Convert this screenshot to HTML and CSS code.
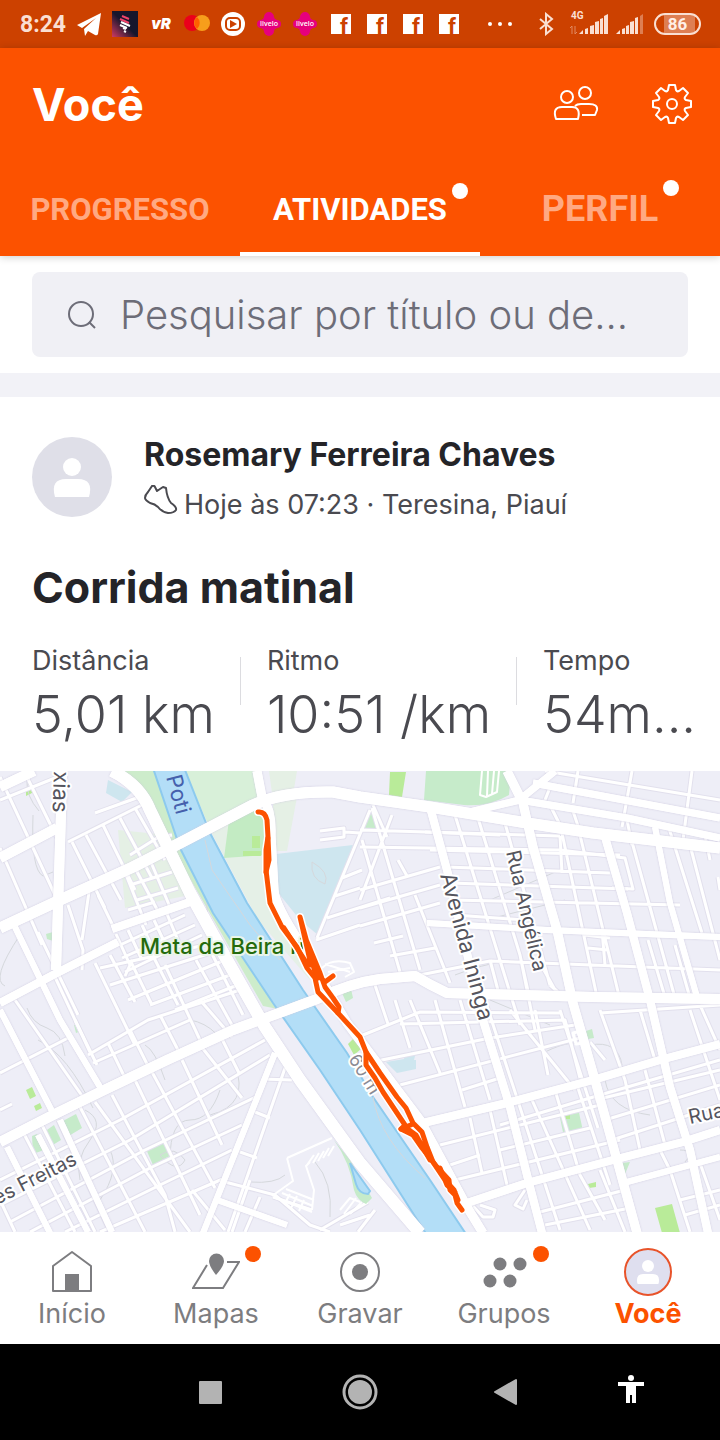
FILE: index.html
```html
<!DOCTYPE html>
<html lang="pt-BR">
<head>
    <meta charset="UTF-8">
    <meta name="viewport" content="width=device-width, initial-scale=1.0">
    <title>Você - Atividades</title>
    <link rel="stylesheet" href="styles.css">
</head>
<body>
    <div class="status-bar">
        <span class="clock">8:24</span>
        <div class="notifications">
            <svg viewBox="0 0 26 26"><path d="M1 14 25 2 22 23q-1 2-3 1l-7-4-3 5-1-7 12-11L6 17z" fill="#fff"/></svg>
            <svg viewBox="0 0 26 26">
                <defs><linearGradient id="app" x1="0" y1="1" x2="1" y2="0"><stop offset="0" stop-color="#d03a62"/><stop offset=".5" stop-color="#16162c"/></linearGradient></defs>
                <path d="M0 0h26v26H0z" fill="url(#app)"/>
                <path d="m10 5 7 3M8 8l9 4" stroke="#f0436a" stroke-width="2"/>
                <path d="m9 11 9 4M8 14l7 3M11 17l3 1M12 20l2 1" stroke="#fff" stroke-width="2"/>
            </svg>
            <svg viewBox="0 0 26 26"><text x="13" y="18" text-anchor="middle" class="logo-vr">vR</text></svg>
            <svg viewBox="0 0 26 26"><circle cx="8" cy="12" r="8" fill="#eb001b"/><circle cx="18" cy="12" r="8" fill="#f79e1b"/><path d="M13 6a8 8 0 0 1 0 12 8 8 0 0 1 0-12" fill="#ff5f00"/></svg>
            <svg viewBox="0 0 26 26"><circle cx="13" cy="13" r="12" fill="#fff"/><rect x="6" y="7" width="14" height="12" rx="4" fill="none" stroke="#cc4100" stroke-width="2"/><path d="m10 9 7 4-7 4z" fill="#cc4100"/></svg>
            <svg viewBox="0 0 26 26"><path d="M8 6a5 5 0 0 1 10 0q0 2 3 3a4 4 0 0 1 0 8q-3 1-3 3a5 5 0 0 1-10 0q0-2-3-3a4 4 0 0 1 0-8q3-1 3-3" fill="#e6007e"/><text x="13" y="15" text-anchor="middle" class="logo-livelo">livelo</text></svg>
            <svg viewBox="0 0 26 26"><path d="M8 6a5 5 0 0 1 10 0q0 2 3 3a4 4 0 0 1 0 8q-3 1-3 3a5 5 0 0 1-10 0q0-2-3-3a4 4 0 0 1 0-8q3-1 3-3" fill="#e6007e"/><text x="13" y="15" text-anchor="middle" class="logo-livelo">livelo</text></svg>
            <svg viewBox="0 0 26 26"><path d="M3 3h20v20H3z" fill="#fff"/><text x="16" y="23" text-anchor="middle" class="logo-f">f</text></svg>
            <svg viewBox="0 0 26 26"><path d="M3 3h20v20H3z" fill="#fff"/><text x="16" y="23" text-anchor="middle" class="logo-f">f</text></svg>
            <svg viewBox="0 0 26 26"><path d="M3 3h20v20H3z" fill="#fff"/><text x="16" y="23" text-anchor="middle" class="logo-f">f</text></svg>
            <svg viewBox="0 0 26 26"><path d="M3 3h20v20H3z" fill="#fff"/><text x="16" y="23" text-anchor="middle" class="logo-f">f</text></svg>
        </div>
        <div class="system">
            <svg class="more" viewBox="0 0 26 24"><g fill="#fff"><circle cx="3" cy="12" r="2"/><circle cx="13" cy="12" r="2"/><circle cx="23" cy="12" r="2"/></g></svg>
            <svg class="bluetooth" viewBox="0 0 16 24"><path d="m2 7 12 10-6 5V2l6 5L2 17" fill="none" stroke="#fadfd2" stroke-width="2"/></svg>
            <svg class="signal" viewBox="0 0 38 24">
                <text x="2" y="7" class="net">4G</text>
                <path d="M3 22v-8l-2 2M6 14v8l2-2" stroke="#e08a62" fill="none"/>
                <path d="m10 22 4-4v4zm6-5 3-1v6h-3zm5-3 4-1v9h-4zm5-4 4-1v13h-4zm5-3 3-1v16h-3zm4-3 4-2v20h-4z" fill="#fadfd2"/>
            </svg>
            <svg class="signal2" viewBox="0 0 28 24"><path d="m0 22 4-4v4zm6-5 3-1v6H6zm4-3 3-1v9h-3zm4-4 4-1v13h-4zm5-4 3-1v17h-3z" fill="#fadfd2"/><path d="m24 4 3-2v20h-3z" fill="#de7e52"/></svg>
            <span class="battery">86</span>
        </div>
    </div>

    <header>
        <div class="title-row">
            <h1>Você</h1>
            <div class="actions">
                <button aria-label="Amigos">
                    <svg width="48" height="48" viewBox="0 0 48 48">
                        <circle cx="15" cy="17" r="6"/><circle cx="33" cy="13" r="6"/>
                        <path d="M4 39q-4-12 6-12h10q9 0 6 12zM23 26q2-2 6-2h8q9 0 8 6l-2 5H30" stroke-linejoin="round"/>
                    </svg>
                </button>
                <button aria-label="Configurações">
                    <svg width="48" height="48" viewBox="0 0 48 48">
                        <circle cx="24" cy="24" r="5"/>
                        <path d="M20 10 21 5h6l1 5q1 2 3 1l4-3 5 5-3 4q-1 2 1 3l5 1v6l-5 1q-2 1-1 3l3 4-5 5-4-3q-2-1-3 1l-1 5h-6l-1-5q-1-2-3-1l-4 3-5-5 3-4q1-2-1-3l-5-1v-6l5-1q2-1 1-3l-3-4 5-5 4 3q2 1 3-1z" stroke-linejoin="round"/>
                    </svg>
                </button>
            </div>
        </div>
        <nav class="tabs">
            <a href="#progresso"><span>PROGRESSO</span></a>
            <a href="#atividades" class="active"><span>ATIVIDADES<i class="dot"></i></span></a>
            <a href="#perfil" class="large"><span>PERFIL<i class="dot"></i></span></a>
        </nav>
    </header>

    <div class="search">
        <label class="search-box" for="busca">
            <svg width="32" height="32" viewBox="0 0 32 32" aria-label="Pesquisar"><circle cx="15" cy="15" r="12"/><path d="m23 23 6 6"/></svg>
            <input type="text" id="busca" placeholder="Pesquisar por título ou de...">
        </label>
    </div>

    <article class="card">
        <div class="athlete">
            <svg class="avatar" viewBox="0 0 80 80"><circle cx="40" cy="40" r="40" fill="#dfdfe8"/><circle cx="40" cy="30" r="9" fill="#fff"/><path d="M23 60q-5-18 11-18h12q16 0 11 18z" fill="#fff"/></svg>
            <div>
                <h2>Rosemary Ferreira Chaves</h2>
                <p class="meta">
                    <svg width="34" height="30" viewBox="0 0 34 30"><path d="M1 13q0-3 3-6l4-6q2-1 3 1l2 4 6-4 3 1q1 10 5 15 6 4 5 7-2 3-8 3-6-1-10-6-3-3-8-4-5-3-5-5z" stroke-linejoin="round"/></svg>
                    <span>Hoje às 07:23 · Teresina, Piauí</span>
                </p>
            </div>
        </div>
        <h3>Corrida matinal</h3>
        <dl class="stats">
            <div><dt>Distância</dt><dd>5,01 km</dd></div>
            <div><dt>Ritmo</dt><dd>10:51 /km</dd></div>
            <div><dt>Tempo</dt><dd>54m...</dd></div>
        </dl>
    </article>

    <svg class="map" viewBox="0 771 720 461" preserveAspectRatio="xMidYMid slice">
        <defs>
            <!-- small streets -->
            <g id="minor">
                <path d="M0 777 55 895M24 771 57 838M0 848 42 945M0 800 55 778M68 842 142 805M72 842 105 908M86 835 121 900M103 825 135 890M120 818 152 878M135 808 165 860M95 813 142 796M130 855 157 838 172 835M68 905 83 950 82 970M90 885 82 940M98 895 116 932M125 872 146 925M135 868 160 915M150 860 170 907M128 910 155 902M137 900 178 888M130 885 172 872"/>
                <path d="M116 934 130 965 125 976M128 930 142 960M142 925 156 955M154 920 168 950M167 914 180 945M120 945 185 915M122 958 195 925M125 972 202 935M55 977 90 1052M95 963 135 1045M110 955 135 1002M130 960 152 1005M150 950 178 1005M165 965 200 1040M196 960 232 1025M210 950 243 1015M100 968 205 945M110 985 220 950M128 1000 225 960M150 1005 238 972M175 1010 245 982"/>
                <path d="M0 1073 70 1037M15 1000 85 1100M75 1020 97 1065M88 1055 148 1020 240 990M93 1063 190 1020M108 1043 125 1078M130 1030 150 1070M160 1015 178 1050M200 1000 232 1037M78 1015 38 932"/>
                <path d="M95 1102 190 1232M112 1095 165 1195 175 1232M135 1080 200 1215M152 1072 215 1188M182 1060 222 1145M200 1045 242 1098M220 1035 240 1075M80 1107 145 1232M58 1120 110 1232M42 1125 95 1232M22 1130 75 1232M0 1180 120 1120 265 1040M0 1205 130 1140 270 1055M10 1222 145 1150 260 1095M30 1232 150 1168 242 1125M65 1232 160 1185 232 1150M100 1232 225 1178M0 1110 12 1104M0 1200 15 1232M262 1079 292 1080M285 1068 228 1232M255 1112 270 1118M240 1152 257 1158M192 1190 225 1230M250 1180 232 1232M225 1182 275 1195 310 1225 330 1232M260 1197 245 1232"/>
                <path d="M320 1230 368 1202M340 1225 370 1215M375 1210 358 1232M273 1197 312 1210"/>
                <path d="M370 810 317 938M342 878 362 870M335 896 360 888M327 918 390 898M316 940 360 925M320 831 344 828V837L320 840M345 832 360 833M373 805 387 837M360 830 560 836M360 847 560 850 625 858 633 889 612 888M392 815 360 900M360 890 440 867M360 908 440 885M360 926 440 903M415 895 450 983M372 808 420 970M362 840 400 972M398 860 407 876M374 943 403 936M390 956 435 948"/>
                <path d="M455 815 520 1025M478 818 520 955 535 1030M505 823 550 985M450 883 628 889M445 867 610 873M450 900 680 905M455 915 525 920M430 850 620 855M425 832 500 835M560 824 597 997M580 835 620 1000M632 842 675 998M668 825 702 933M690 845 720 960M560 836 562 873M420 975 490 961 720 970M490 960 500 998M520 955 530 1000M544 970 555 990M585 935 610 938M588 948 608 950M602 930 605 965M648 940 665 997M675 945 690 998M545 771 720 800M578 771 573 803M632 771 622 827M692 771 683 840M549 790 545 800M550 805 560 825M572 808 580 832M627 820 632 845M705 835 710 860M718 877 720 890M550 985 558 992"/>
                <path d="M363 1035 420 1012 560 1013M400 1024 565 1020 580 1078M372 1062 490 1038 575 1025M400 1085 580 1038M375 985 388 1024M395 1000 410 1048M410 1000 440 1073M435 1000 465 1107M460 1000 490 1100M485 1000 560 1230M510 1010 575 1090M535 1010 548 1075M560 1010 598 1128M600 1010 625 1080M600 1013 720 1005M462 1090 500 1078M470 1110 600 1080M440 1145 600 1105M450 1165 480 1155M455 1180 620 1140M470 1118 482 1173M490 1110 507 1185M500 1125 600 1095 720 1060M595 1100 720 1070M605 1120 720 1085M612 1140 720 1105M532 1100 590 1230M555 1090 580 1175 605 1220M578 1088 610 1185M625 1080 640 1150M645 1070 665 1145M640 1010 655 1060M690 1010 720 1100M700 1005 720 1050M590 1042 605 1060M500 1150 590 1128M540 1212 625 1190M545 1225 630 1208M600 1170 625 1232M670 1170 690 1232M680 1200 720 1190M685 1215 720 1205M700 1163 720 1220M660 1150 670 1170M480 1205 495 1210 493 1217 483 1217 472 1205M525 1190 515 1205 523 1209 527 1200"/>
            </g>
            <!-- car parks and lots -->
            <path id="lots" d="M287 1158 332 1138M287 1158 293 1181 272 1196M310 1162 306 1166 314 1190 312 1210M314 1155 307 1165M319 1153 313 1163M324 1151 318 1161M329 1148 323 1158M334 1146 328 1156M276 1198 312 1212M282 1193 313 1206M286 1189 314 1200M290 1194 285 1203M297 1196 291 1208M304 1200 299 1211M340 1210 350 1198 360 1202M344 1214 356 1198M350 1214 362 1202M322 968Q332 958 350 963L354 972 345 977M328 972 350 968M325 964 350 972"/>
            <g id="major">
                <path d="M62 771 61 813 56 970M0 858 57 828M0 787 34 771" stroke-width="10"/>
                <path d="M0 928 60 900 133 867 180 843 253 805Q283 791 333 792L360 797 430 807 527 823 593 833 720 848" stroke-width="11"/>
                <path d="M470 812Q490 807 520 800L627 818 720 838M523 797 555 771M533 783 720 818" stroke-width="7"/>
                <path d="M112 771Q140 785 150 810L190 893 227 960 265 1027 300 1080 360 1163 420 1233" stroke-width="12"/>
                <path d="M0 1003 53 975 118 942M112 929 190 902" stroke-width="8"/>
                <path d="M0 1142 53 1115 100 1092 167 1060 233 1030 317 999Q350 983 380 979L415 976Q430 985 447 993L593 997 720 999" stroke-width="10"/>
                <path d="M430 807 447 870 483 1020 510 1107 530 1187 542 1233M605 837 627 913 650 1000 670 1087 690 1150 708 1233" stroke-width="8"/>
                <path d="M507 771 523 803 533 847 557 930 573 1003 593 1073 617 1160 637 1233" stroke-width="9"/>
                <path d="M423 1123 507 1103 593 1080 660 1060 720 1044M467 1203 527 1183 613 1160 683 1142 720 1130" stroke-width="8"/>
                <path d="M257 771 262 797Q272 810 271 835L274 890Q275 905 300 943L347 1023 420 1120 467 1207 483 1233" stroke-width="9"/>
                <path d="M627 1182 720 1157M427 923 547 930 720 937M655 827 670 903 697 997" stroke-width="6"/>
                <path d="M15 927 60 1020 100 1087M0 1010 53 1113M7 1147 50 1233M275 1053 203 1233M217 1200 287 1225M38 1135 88 1232M60 1120 112 1232" stroke-width="6"/>
            </g>
            <g id="track">
                <path d="M258 812Q265 811 267 820L268 837 266 850 266 870 270 903 282 927 297 947 307 968 315 978 318 992 338 1013 360 1037 366 1052 366 1065 375 1078 383 1092 393 1107 405 1125 401 1129 413 1135 422 1148 437 1167 449 1180 450 1190 455 1195 457 1203 462 1210"/>
                <path d="M333 976 325 982 315 972 300 917 305 937 320 973 325 987 333 998 339 1007 338 1013M300 917 311 965 306 962 284 928M318 978 310 952M268 838 269 860 266 872"/>
                <path d="M366 1052 380 1073 397 1097 406 1108 413 1123 422 1132 427 1147 433 1162 445 1180 454 1190 458 1200M401 1129 413 1124M405 1127 416 1135 430 1160 424 1148M440 1168 447 1185 455 1192"/>
            </g>
        </defs>

        <path d="M0 771h720v462H0z" fill="#eeeef7"/>
        <!-- parks and green areas -->
        <path d="M118 771h40l130 240-25-5L165 835q-10-45-47-64" fill="#cdeccb"/>
        <path d="M118 830 168 835 190 895 125 908z" fill="#e5f0e5"/>
        <path d="M185 771h70l5 25-52 28z" fill="#d8f0d9"/>
        <path d="M210 830 255 805 266 810 270 900 300 945 310 980 258 920z" fill="#e5f0e7"/>
        <path d="M229 820 252 810 264 812 266 855 224 858z" fill="#c3ebc3"/>
        <path d="M297 771h-28l3 22 22-4zM273 803l24-6-10 54h-14z" fill="#e5f0e5"/>
        <path d="M426 771h85l-2 24q-20 12-45 10l-40-5zM372 810l10 18-19 2z" fill="#c6ebca"/>
        <path d="M390 772h16l-4 25-13-2zM243 851h18v5h-18zM252 836h8v12h-8zM26 791l8-3-2 5-6 3z" fill="#b9eb99"/>
        <path d="M276 854 353 845 318 935 300 920 276 890z" fill="#cee6ef"/>
        <path d="m108 780 24 12-10 10-16-9zM386 1062l18-3 1-4 6-1v-3l5 1-2 8h2v9l-19 4z" fill="#cee6ef"/>
        <path d="m61 1122 15-8 6 14-15 9zM44 1132l10-7 7 15-10 6zM32 1136l5-2 7 16-11 4zM146 1149l16-8 8 15-17 9zM559 1113l19-5 5 23-19 6zM586 1031l6-2 2 9-6 1zM622 1163l8-1-5 12zM74 1025l5-1 2 7-5 2zM46 934l7-2v9l-6-2zM342 993l9-4 2 9-7 4z" fill="#c6ebca"/>
        <path d="m655 1208 17-4 8 29h-18zM588 1184l8-2v5l-7 1zM26 1090l6-3 4 9-6 3zM34 1106l6-3 2 5-6 3zM565 1114h5v5h-5z" fill="#b9eb99"/>
        <!-- contour lines -->
        <g class="contour">
            <path d="M27 781q-1 15 12 30M33 815q-2 55 10 61l10-4M20 935q-30 45-15 51M27 1008q5 15 20 20t18 28M38 1040q30 15 55 68M195 838l20 8q5 30 15 45l30 35M205 865l3 65q20 40 45 70M312 862q18 10 13 22-15-5-13-22M490 900l70-30M485 920l80-20M455 975q25-10 55-15"/>
            <path d="M190 1020q30 5 45 45t-25 50M165 1080q-10-30-20-35M220 1090q-10 30-30 30t-20 40M85 1110q20 10 5 30t-10 40M100 1200q20-30 10-50M250 1182q25 2 35-7M315 1162q18 20 15 55M605 1080q5 30 45 35M545 1052q30-15 45-5M680 1150q15 0 5 12M490 1000l60 25M160 1155q15-10 25 5-8 15-25-5M590 1045q28-5 32 20"/>
        </g>
        <use href="#minor" class="case"/>
        <use href="#minor" class="street"/>
        <use href="#lots" class="lot"/>
        <!-- Rio Poti -->
        <path class="river" d="M152 765 180 848 213 913 273 1003 320 1070 360 1130 430 1240H470L430 1180 373 1097 347 1053 303 990 247 903 210 833 183 765z"/>
        <path d="M205 840 212 870 250 925 280 960M373 1097Q380 1140 425 1178" class="contour"/>
        <path d="m334 1140 16 20 22 38-6 6q-9-4-12-14-4-28-20-50" fill="#c6ebca"/>
        <path d="m350 1163 20 28-2 3q-9 0-12-10z" fill="#b3def7" stroke="#8dcaee" stroke-width="2"/>
        <path d="m348 1044 5-5 8 10-7 6z" fill="#b9eb99"/>
        <use href="#major" class="road-case"/>
        <use href="#major" class="road"/>
        <path class="lot" d="M482 771 480 795 486 797 497 792 499 771M488 771 487 796M494 771 492 794"/>
        <path class="street" d="M573 1033 581 1031 584 1043 576 1044z"/>

        <text transform="translate(54 771) rotate(92)" class="lbl">xias</text>
        <text transform="translate(166 777) rotate(75)" class="lbl water">Poti</text>
        <text x="140" y="954" class="lbl park">Mata da Beira ri</text>
        <text transform="translate(440 875) rotate(75)" class="lbl">Avenida Ininga</text>
        <text transform="translate(506 852) rotate(77)" class="lbl small">Rua Angélica</text>
        <text transform="translate(690 1124) rotate(-12)" class="lbl small">Rua</text>
        <text transform="translate(-3 1205) rotate(-27)" class="lbl small">es Freitas</text>
        <text transform="translate(348 1059) rotate(58)" class="lbl height">60 m</text>
        <use href="#track" class="track-case"/>
        <use href="#track" class="track"/>
    </svg>

    <nav class="bottom-nav">
        <a href="#inicio">
            <span class="icon"><svg width="48" height="48" viewBox="0 0 48 48"><path d="M5 18 24 4l19 14v25H5z" stroke-linejoin="round"/><path d="M17 26h14v17H17z" class="fill"/></svg></span>
            Início
        </a>
        <a href="#mapas">
            <span class="icon"><svg width="48" height="48" viewBox="0 0 48 48"><path d="M15 17 1 40h30l16-26H35"/><path d="M24 27q-7-9-7-14a7 7 0 0 1 15 0q0 5-8 14" class="fill"/></svg><i class="dot"></i></span>
            Mapas
        </a>
        <a href="#gravar">
            <span class="icon"><svg width="48" height="48" viewBox="0 0 48 48"><circle cx="24" cy="24" r="19"/><circle cx="24" cy="24" r="8" class="fill"/></svg></span>
            Gravar
        </a>
        <a href="#grupos">
            <span class="icon"><svg width="48" height="48" viewBox="0 0 48 48"><g class="fill"><circle cx="20" cy="16" r="6.5"/><circle cx="40" cy="16" r="6.5"/><circle cx="10" cy="33" r="6.5"/><circle cx="30" cy="33" r="6.5"/></g></svg><i class="dot"></i></span>
            Grupos
        </a>
        <a href="#voce" class="active">
            <span class="icon"><svg width="48" height="48" viewBox="0 0 48 48"><circle cx="24" cy="24" r="23" class="ring"/><circle cx="24" cy="18" r="6" fill="#fff" stroke="none"/><path d="M14 36h20q1 0 1-4 0-6-6-6H19q-6 0-6 6 0 4 1 4" fill="#fff" stroke="none"/></svg></span>
            Você
        </a>
    </nav>

    <div class="system-nav">
        <button aria-label="Recentes"><svg width="48" height="48" viewBox="0 0 48 48"><rect x="13" y="13" width="23" height="23" rx="1" fill="#b3b3b3"/></svg></button>
        <button aria-label="Home"><svg width="48" height="48" viewBox="0 0 48 48"><circle cx="24" cy="24" r="16" fill="none" stroke="#b3b3b3" stroke-width="3"/><circle cx="24" cy="24" r="12" fill="#b3b3b3"/></svg></button>
        <button aria-label="Voltar"><svg width="48" height="48" viewBox="0 0 48 48"><path d="m14 24 21-12v24z" fill="#b3b3b3" stroke="#b3b3b3" stroke-width="2" stroke-linejoin="round"/></svg></button>
        <button aria-label="Acessibilidade"><svg width="48" height="48" viewBox="0 0 48 48"><circle cx="24" cy="10" r="3" fill="#fff"/><path d="M11 14h26v4h-8v17h-4v-8h-2v8h-4V18h-8z" fill="#fff"/></svg></button>
    </div>
</body>
</html>
```

FILE: styles.css
```css
* {
    box-sizing: border-box;
}
body {
    margin: 0;
    min-height: 100vh;
    display: flex;
    flex-direction: column;
    font-family: Inter, "Liberation Sans", sans-serif;
    background: #fff;
    color: #4a4a50;
}
h1, h2, h3, p, dl, dd {
    margin: 0;
}
a {
    text-decoration: none;
}
button {
    border: none;
    padding: 0;
    background: none;
    cursor: pointer;
    display: flex;
}

/* Status bar */
.status-bar {
    height: 48px;
    background: #cc4100;
    display: flex;
    align-items: center;
    justify-content: space-between;
    padding: 0 19px 0 20px;
}
.clock {
    width: 56px;
    font-family: Roboto, sans-serif;
    font-size: 23px;
    font-weight: 700;
    color: #fadfd2;
}
.notifications {
    display: flex;
    gap: 10px;
    margin-right: auto;
}
.notifications svg {
    width: 26px;
    height: 26px;
}
.logo-vr {
    font: italic 900 15px Inter, sans-serif;
    fill: #fff;
}
.logo-livelo {
    font: 600 7px "Open Sans", sans-serif;
    fill: #fff;
}
.logo-f {
    font: 700 22px Roboto, sans-serif;
    fill: #cc4100;
}
.system {
    display: flex;
    align-items: center;
}
.system svg {
    height: 24px;
}
.more {
    width: 26px;
    margin-right: 25px;
}
.bluetooth {
    width: 16px;
    margin-right: 15px;
}
.signal {
    width: 38px;
    margin-right: 9px;
    overflow: visible;
}
.signal2 {
    width: 28px;
    margin-right: 10px;
}
.net {
    font: 700 10px Roboto, sans-serif;
    fill: #fadfd2;
}
.battery {
    width: 47px;
    height: 22px;
    border: 2px solid #fadfd2;
    border-radius: 11px;
    background: linear-gradient(90deg, transparent 18%, #de7e52 18%, #de7e52 90%, transparent 90%);
    color: #fff0e8;
    font: 700 17px/18px Roboto, sans-serif;
    text-align: center;
}

/* Header */
header {
    background: #fc5200;
    color: #fff;
    box-shadow: 0 1px 8px rgba(0, 0, 0, 0.2);
}
.title-row {
    height: 112px;
    padding: 0 24px 0 32px;
    display: flex;
    align-items: center;
    justify-content: space-between;
}
h1 {
    font-size: 45px;
}
.actions {
    display: flex;
    gap: 48px;
}
.actions svg {
    fill: none;
    stroke: #fff;
    stroke-width: 2;
}
.tabs {
    display: grid;
    grid-template-columns: repeat(3, 1fr);
    height: 96px;
}
.tabs a {
    display: flex;
    align-items: center;
    justify-content: center;
    border-bottom: 4px solid transparent;
    padding-top: 6px;
    color: #ffa982;
    font: 700 31px Roboto, sans-serif;
}
.tabs a.active {
    color: #fff;
    border-color: #fff;
}
.tabs a.large {
    font-size: 36px;
}
.tabs span {
    position: relative;
}
.dot {
    position: absolute;
    left: 100%;
    top: -8px;
    width: 16px;
    height: 16px;
    margin-left: 5px;
    border-radius: 50%;
    background: #fff;
}

/* Search */
.search {
    padding: 16px 32px;
    border-bottom: 24px solid #f2f2f7;
}
.search-box {
    height: 85px;
    border-radius: 8px;
    background: #f0f0f5;
    display: flex;
    align-items: center;
    gap: 22px;
    padding: 0 34px;
}
.search-box svg {
    flex: none;
    fill: none;
    stroke: #6d6d78;
    stroke-width: 2;
}
.search-box input {
    flex: 1;
    min-width: 0;
    border: none;
    padding: 0;
    background: none;
    font: 300 40px Inter, sans-serif;
    color: #6d6d78;
}
.search-box input::placeholder {
    color: #6d6d78;
    opacity: 1;
}

/* Activity card */
.card {
    padding: 40px 32px 24px;
}
.athlete {
    display: flex;
    gap: 32px;
}
.avatar {
    width: 80px;
    height: 80px;
}
h2 {
    font-size: 32px;
    line-height: 36px;
    color: #242428;
}
.meta {
    display: flex;
    gap: 6px;
    margin-top: 12px;
    font-size: 27px;
    line-height: 40px;
}
.meta svg {
    fill: none;
    stroke: #4a4a50;
    stroke-width: 2;
}
h3 {
    margin-top: 34px;
    font-size: 43px;
    line-height: 56px;
    color: #242428;
}
.stats {
    display: flex;
    margin-top: 28px;
}
.stats div {
    position: relative;
    padding-right: 26px;
    margin-right: 26px;
    white-space: nowrap;
}
.stats div:last-child {
    padding: 0;
    margin: 0;
}
.stats div:not(:last-child)::after {
    content: "";
    position: absolute;
    right: 0;
    top: 14px;
    height: 48px;
    border-right: 1px solid #dcdce0;
}
dt {
    font-size: 27px;
    line-height: 36px;
}
dd {
    margin-top: 4px;
    font-size: 52px;
    font-weight: 300;
    line-height: 64px;
}

/* Map */
.map {
    display: block;
    width: 100%;
    height: 0;
    min-height: 300px;
    flex: 1 0 0px;
}
.contour {
    fill: none;
    stroke: #d5d8dc;
    stroke-width: 1;
}
.case, .street, .road, .road-case, .lot {
    fill: none;
    stroke: #fff;
    stroke-linejoin: round;
}
.case {
    stroke: #e2e0ed;
    stroke-width: 5;
}
.street {
    stroke-width: 3;
}
.lot {
    stroke-width: 2;
}
.road-case {
    filter: drop-shadow(0 0 1px #cfcbe0);
}
.river {
    fill: #b3def7;
    stroke: #8dcaee;
    stroke-width: 2;
}
.lbl {
    font: 400 22px Inter, sans-serif;
    fill: #55555e;
    stroke: #fff;
    stroke-width: 4;
    stroke-linejoin: round;
    paint-order: stroke;
}
.lbl.small {
    font-size: 20px;
}
.lbl.water {
    fill: #4560ac;
    stroke: #b3def7;
}
.lbl.park {
    font-weight: 500;
    fill: #246b0c;
    stroke: #eaf5e9;
}
.lbl.height {
    font-size: 18px;
    fill: #8b8b94;
}
.track, .track-case {
    fill: none;
    stroke: #fc5200;
    stroke-width: 5;
    stroke-linecap: round;
    stroke-linejoin: round;
}
.track-case {
    stroke: #fff;
    stroke-width: 8;
}

/* Bottom navigation */
.bottom-nav {
    height: 112px;
    background: #fff;
    display: grid;
    grid-template-columns: repeat(5, 1fr);
}
.bottom-nav a {
    display: flex;
    flex-direction: column;
    align-items: center;
    padding-top: 16px;
    color: #7d7d80;
    font-size: 27px;
    line-height: 36px;
}
.bottom-nav .icon {
    position: relative;
    height: 48px;
}
.bottom-nav svg {
    fill: none;
    stroke: #7d7d80;
    stroke-width: 2;
}
.bottom-nav .fill {
    fill: #7d7d80;
    stroke: none;
}
.bottom-nav .dot {
    top: -2px;
    background: #fc5200;
}
.bottom-nav .ring {
    fill: #dfdfef;
    stroke: #e8532a;
}
.bottom-nav a.active {
    color: #fc5200;
    font-weight: 700;
}

/* Android buttons */
.system-nav {
    height: 96px;
    background: #000;
    display: grid;
    grid-template-columns: 150fr 150fr 140fr 112fr;
    align-items: center;
    justify-items: center;
    padding: 0 33px 0 135px;
}
```
